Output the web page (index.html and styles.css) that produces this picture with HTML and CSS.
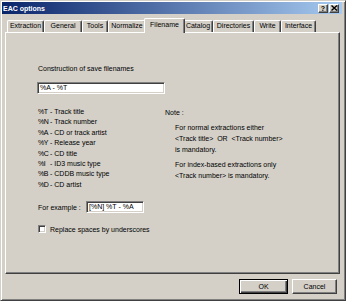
FILE: index.html
```html
<!DOCTYPE html>
<html lang="en">
<head>
    <meta charset="UTF-8">
    <title>EAC options</title>
    <link rel="stylesheet" href="styles.css">
</head>
<body>
    <div class="window">
        <!-- Title bar -->
        <div class="titlebar">
            <span class="title">EAC options</span>
            <div class="caption-buttons">
                <span class="cap-btn help">?</span>
                <span class="cap-btn close">
                    <svg width="7" height="6" viewBox="0 0 7 6"><path d="M0.5 0.5 L6 5.5 M6 0.5 L0.5 5.5" stroke="#000" stroke-width="1.4"/></svg>
                </span>
            </div>
        </div>

        <!-- Tabs -->
        <ul class="tabs">
            <li class="tab">Extraction</li>
            <li class="tab">General</li>
            <li class="tab">Tools</li>
            <li class="tab">Normalize</li>
            <li class="tab active">Filename</li>
            <li class="tab">Catalog</li>
            <li class="tab">Directories</li>
            <li class="tab">Write</li>
            <li class="tab">Interface</li>
        </ul>

        <div class="panel">
            <p class="caption">Construction of save filenames</p>
            <div class="field field-wide">%A - %T</div>

            <div class="info">
                <ul class="codes">
                    <li><span class="code">%T</span>- Track title</li>
                    <li><span class="code">%N</span>- Track number</li>
                    <li><span class="code">%A</span>- CD or track artist</li>
                    <li><span class="code">%Y</span>- Release year</li>
                    <li><span class="code">%C</span>- CD title</li>
                    <li><span class="code">%I</span>- ID3 music type</li>
                    <li><span class="code">%B</span>- CDDB music type</li>
                    <li><span class="code">%D</span>- CD artist</li>
                </ul>
                <div class="note">
                    <p>Note :</p>
                    <p class="note-text">For normal extractions either<br>&lt;Track title&gt;&nbsp; OR &nbsp;&lt;Track number&gt;<br>is mandatory.</p>
                    <p class="note-text">For index-based extractions only<br>&lt;Track number&gt; is mandatory.</p>
                </div>
            </div>

            <div class="example">
                <span class="example-label">For example :</span>
                <div class="field field-short">[%N] %T - %A</div>
            </div>

            <label class="check">
                <span class="box"></span>
                Replace spaces by underscores
            </label>
        </div>

        <!-- Dialog buttons -->
        <div class="actions">
            <button class="btn btn-default">OK</button>
            <button class="btn">Cancel</button>
        </div>
    </div>
</body>
</html>
```

FILE: styles.css
```css
* {
    margin: 0;
    padding: 0;
    box-sizing: border-box;
    font-family: "Liberation Sans", Arial, sans-serif;
}

body {
    width: 346px;
    height: 301px;
    background: #d4d0c8;
    color: #000;
    font-size: 7px;
    overflow: hidden;
}

/* Window frame */
.window {
    width: 346px;
    height: 301px;
    display: flex;
    flex-direction: column;
    padding: 1px 3px 1px 1px;
    border: 1px solid;
    border-color: #d4d0c8 #404040 #404040 #d4d0c8;
    box-shadow: inset 1px 1px #fff, inset -1px -1px #808080;
}

/* Title bar */
.titlebar {
    height: 12px;
    display: flex;
    align-items: center;
    justify-content: space-between;
    padding: 0 3px 0 1px;
    background: linear-gradient(90deg, #0a246a, #a6caf0);
}

.title {
    color: #fff;
    font-weight: bold;
    font-size: 7px;
}

.caption-buttons {
    display: flex;
    gap: 1px;
}

.cap-btn {
    width: 10px;
    height: 9px;
    display: flex;
    align-items: center;
    justify-content: center;
    background: #d4d0c8;
    border: 1px solid;
    border-color: #fff #404040 #404040 #fff;
    box-shadow: inset -1px -1px #808080;
    font-size: 7px;
    font-weight: bold;
    line-height: 1;
}

/* Tabs */
.tabs {
    list-style: none;
    display: grid;
    grid-template-columns: 37px 38px 26px 38px 37px 30px 41px 27px 35px;
    height: 12px;
    margin: 6px 0 0 5px;
}

.tab {
    border: 1px solid;
    border-bottom: none;
    border-color: #fff #404040 #fff #fff;
    border-radius: 2px 2px 0 0;
    box-shadow: inset -1px 0 #808080;
    background: #d4d0c8;
    text-align: center;
    line-height: 10px;
    white-space: nowrap;
}

.tab.active {
    margin: -2px -2px -1px;
    z-index: 1;
    line-height: 12px;
}

/* Tab page */
.panel {
    height: 242px;
    margin: 0 2px 0 3px;
    padding: 31px 0 0 32px;
    border: 1px solid;
    border-color: #fff #404040 #404040 #fff;
    box-shadow: inset -1px -1px #808080;
}

.caption {
    line-height: 9px;
}

.field {
    height: 12px;
    background: #fff;
    padding-left: 2px;
    line-height: 10px;
    border: 1px solid;
    border-color: #808080 #fff #fff #808080;
    box-shadow: inset 1px 1px #404040, inset -1px -1px #d4d0c8;
    white-space: nowrap;
}

.field-wide {
    width: 128px;
    margin: 9px 0 0 -1px;
}

.field-short {
    width: 58px;
}

.info {
    display: flex;
    margin-top: 13px;
}

.codes {
    list-style: none;
    width: 127px;
    line-height: 10.4px;
}

.code {
    display: inline-block;
    width: 12px;
    letter-spacing: -0.4px;
}

.note {
    line-height: 11px;
}

.note-text {
    margin-top: 4px;
    padding-left: 10px;
}

.example {
    display: flex;
    align-items: center;
    margin-top: 11px;
}

.example-label {
    width: 48px;
}

.check {
    display: flex;
    align-items: center;
    gap: 4px;
    margin-top: 12px;
}

.box {
    width: 8px;
    height: 8px;
    background: #fff;
    border: 1px solid;
    border-color: #808080 #fff #fff #808080;
    box-shadow: inset 1px 1px #404040, inset -1px -1px #d4d0c8;
}

/* OK / Cancel */
.actions {
    display: flex;
    justify-content: flex-end;
    gap: 4px;
    margin-top: 5px;
    padding-right: 5px;
}

.btn {
    width: 45px;
    height: 15px;
    font-size: 7px;
    color: #000;
    background: #d4d0c8;
    border: 1px solid;
    border-color: #fff #404040 #404040 #fff;
    box-shadow: inset -1px -1px #808080;
}

.btn-default {
    width: 49px;
    border-color: #000;
    box-shadow: inset 1px 1px #fff, inset -1px -1px #404040, inset -2px -2px #808080;
}
```
